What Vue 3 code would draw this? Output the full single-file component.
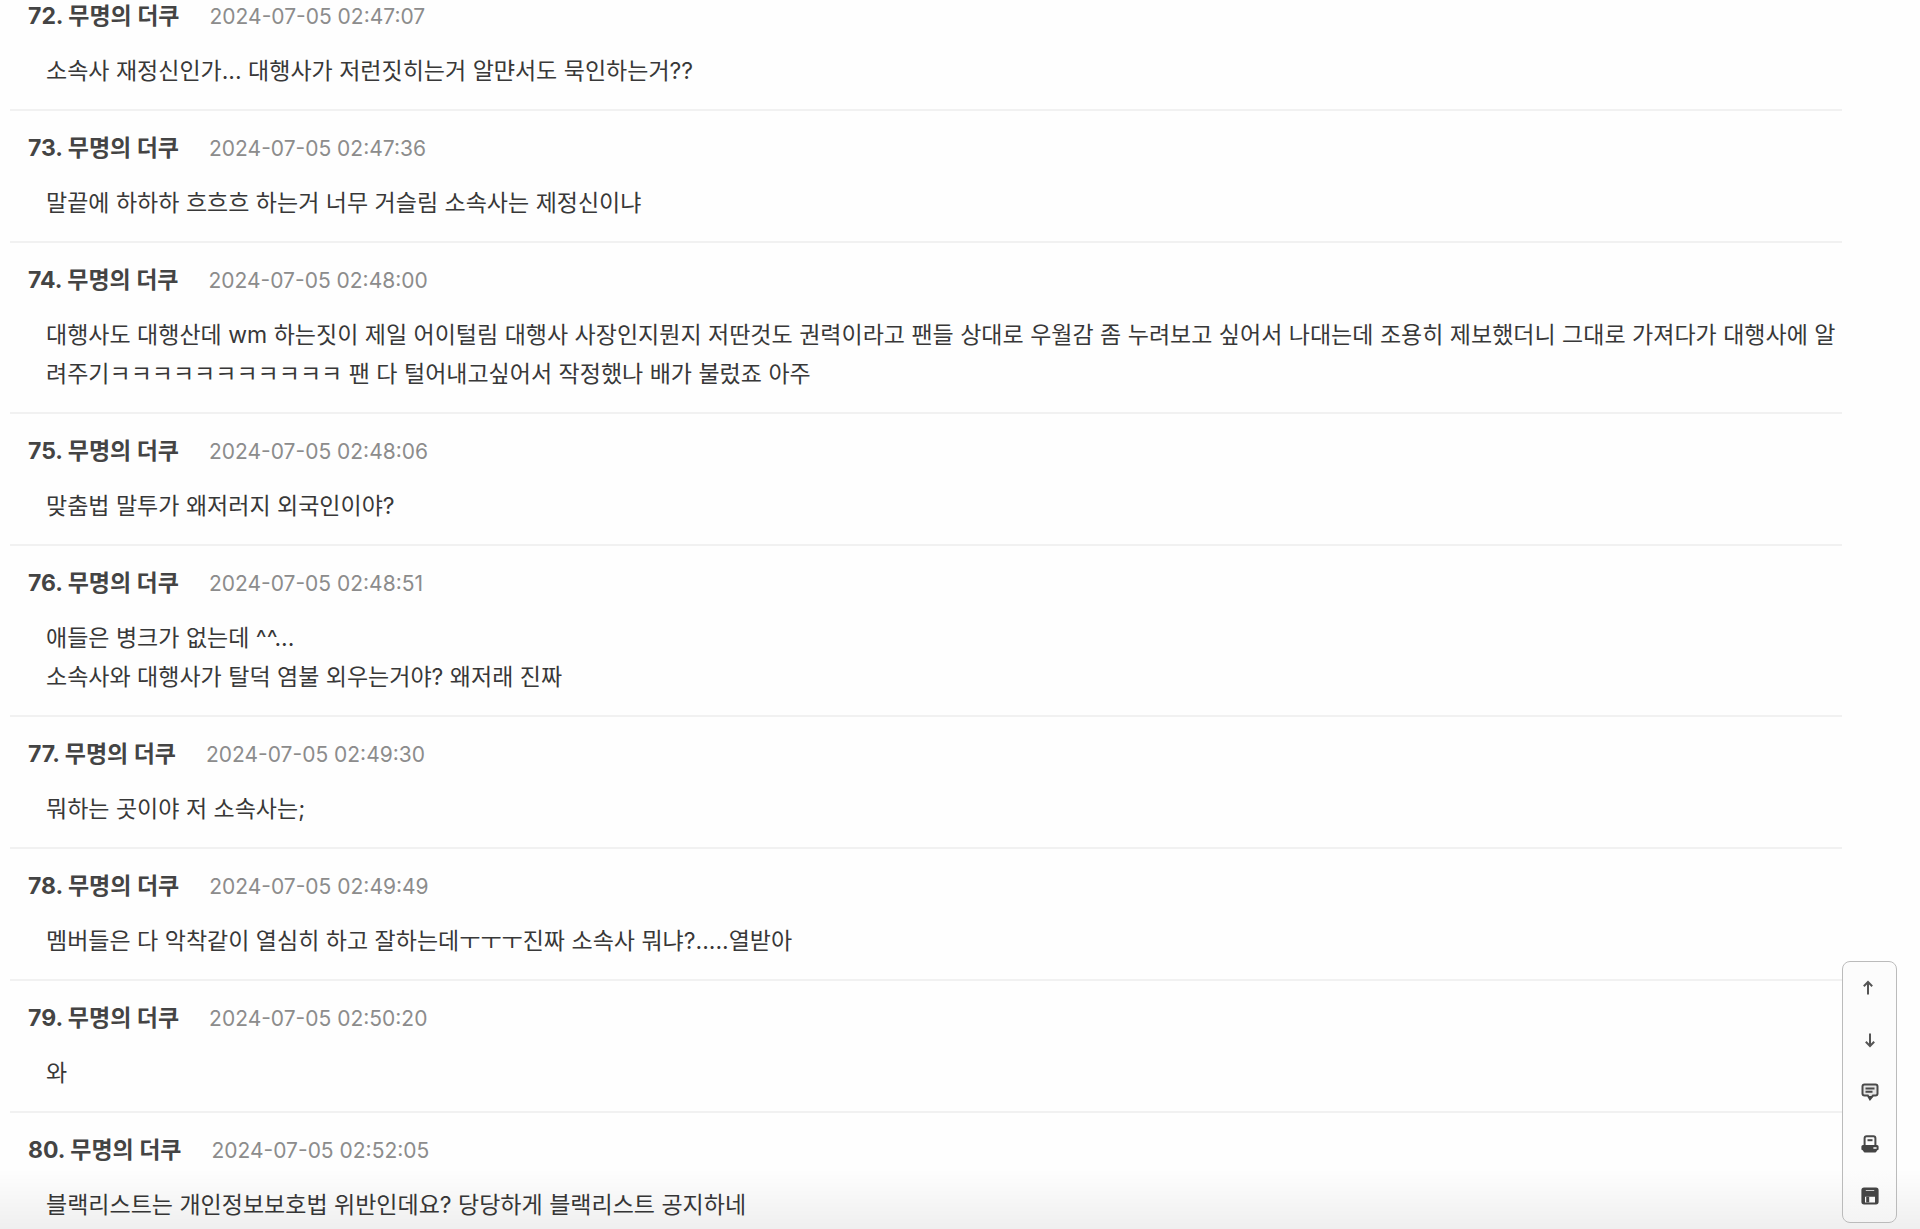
<template>
  <main class="comment-page">
    <ul class="comment-list">
      <li v-for="comment in comments" :key="comment.no" class="comment">
        <div class="comment-meta">
          <strong class="comment-author">{{ comment.no }}. {{ author }}</strong>
          <time class="comment-date">{{ comment.date }}</time>
        </div>
        <p class="comment-body">{{ comment.text }}</p>
      </li>
    </ul>

    <div class="bottom-shade"></div>

    <nav class="side-tools">
      <button type="button" aria-label="맨 위로" @click="scrollToTop">
        <svg class="arrow arrow-up" viewBox="0 0 12 16">
          <path d="M6 14.5V2.5M1.8 6.2L6 2L10.2 6.2" />
        </svg>
      </button>
      <button type="button" aria-label="맨 아래로" @click="scrollToBottom">
        <svg class="arrow" viewBox="0 0 12 16">
          <path d="M6 1.5V13.5M1.8 9.8L6 14L10.2 9.8" />
        </svg>
      </button>
      <button type="button" aria-label="댓글">
        <svg viewBox="0 0 18 18">
          <path class="line bubble" d="M3.5 1.5H14.5Q16.5 1.5 16.5 3.5V10.5Q16.5 12.5 14.5 12.5H12L9 16.2L6.8 12.5H3.5Q1.5 12.5 1.5 10.5V3.5Q1.5 1.5 3.5 1.5Z" />
          <path class="line" d="M4.5 5.4H13.5M4.5 8.8H11.5" />
          <path class="solid" d="M7 13H11.6L9 17Z" />
        </svg>
      </button>
      <button type="button" aria-label="인쇄">
        <svg viewBox="0 0 18 18">
          <path class="line" d="M3.6 11V3.3Q3.6 1.3 5.6 1.3H12.4Q14.4 1.3 14.4 3.3V11" />
          <path class="line" d="M6.5 5.2H11.5" />
          <path class="solid" fill-rule="evenodd" d="M2 10H16Q17.6 10 17.6 11.6V14Q17.6 15.2 16.2 15.2L15.6 16.2Q15.2 17.4 14 17.4H4Q2.8 17.4 2.4 16.2L1.8 15.2Q0.4 15.2 0.4 14V11.6Q0.4 10 2 10ZM12.4 12.2V13.8H15.6V12.2Z" />
        </svg>
      </button>
      <button type="button" aria-label="스크랩">
        <svg viewBox="0 0 18 18">
          <path class="solid" fill-rule="evenodd" d="M3 0.6H15Q17.6 0.6 17.6 3.2V14.8Q17.6 17.4 15 17.4H3Q0.4 17.4 0.4 14.8V3.2Q0.4 0.6 3 0.6ZM4.8 3.2V4H13.2V3.2ZM4 9.8V15.4H14V9.8Z" />
          <path class="solid" d="M5.2 9.8H8.2V15.4H5.2Z" />
        </svg>
      </button>
    </nav>
  </main>
</template>

<script setup>
import { ref } from 'vue';

const author = '무명의 더쿠';

const comments = ref([
  { no: 72, date: '2024-07-05 02:47:07', text: '소속사 재정신인가... 대행사가 저런짓히는거 알먄서도 묵인하는거??' },
  { no: 73, date: '2024-07-05 02:47:36', text: '말끝에 하하하 흐흐흐 하는거 너무 거슬림 소속사는 제정신이냐' },
  { no: 74, date: '2024-07-05 02:48:00', text: '대행사도 대행산데 wm 하는짓이 제일 어이털림 대행사 사장인지뭔지 저딴것도 권력이라고 팬들 상대로 우월감 좀 누려보고 싶어서 나대는데 조용히 제보했더니 그대로 가져다가 대행사에 알려주기ㅋㅋㅋㅋㅋㅋㅋㅋㅋㅋㅋ 팬 다 털어내고싶어서 작정했나 배가 불렀죠 아주' },
  { no: 75, date: '2024-07-05 02:48:06', text: '맞춤법 말투가 왜저러지 외국인이야?' },
  { no: 76, date: '2024-07-05 02:48:51', text: '애들은 병크가 없는데 ^^...\n소속사와 대행사가 탈덕 염불 외우는거야? 왜저래 진짜' },
  { no: 77, date: '2024-07-05 02:49:30', text: '뭐하는 곳이야 저 소속사는;' },
  { no: 78, date: '2024-07-05 02:49:49', text: '멤버들은 다 악착같이 열심히 하고 잘하는데ㅜㅜㅜ진짜 소속사 뭐냐?.....열받아' },
  { no: 79, date: '2024-07-05 02:50:20', text: '와' },
  { no: 80, date: '2024-07-05 02:52:05', text: '블랙리스트는 개인정보보호법 위반인데요? 당당하게 블랙리스트 공지하네' },
]);

const scrollToTop = () => {
  window.scrollTo({ top: 0 });
};

const scrollToBottom = () => {
  window.scrollTo({ top: document.body.scrollHeight });
};
</script>

<style>
body {
  margin: 0;
  background: #fefefe;
}
</style>

<style scoped>
.comment-page {
  height: 100vh;
  overflow: hidden;
  font-family: Inter, "Noto Sans CJK KR", sans-serif;
  color: #383838;
}

.comment-list {
  list-style: none;
  margin: -21px 78px 0 10px;
  padding: 0;
}

.comment {
  padding: 19px 0 18px 18px;
  border-bottom: 2px solid #f1f1f1;
}

.comment-meta {
  display: flex;
  align-items: baseline;
  gap: 30px;
  height: 36px;
  margin-bottom: 18px;
  white-space: nowrap;
}

.comment-author {
  font-size: 23px;
  line-height: 36px;
  font-weight: 700;
  color: #444;
}

.comment-date {
  font-size: 21px;
  line-height: 36px;
  color: #8c8c8c;
}

.comment-body {
  margin: 0;
  padding-left: 18px;
  font-size: 23px;
  line-height: 39px;
  white-space: pre-line;
  word-break: break-all;
}

/* Soft fade along the bottom edge of the window */
.bottom-shade {
  position: fixed;
  left: 0;
  right: 0;
  bottom: 0;
  height: 60px;
  background: linear-gradient(to bottom, rgba(0, 0, 0, 0), rgba(0, 0, 0, 0.06));
  pointer-events: none;
}

.side-tools {
  position: fixed;
  right: 23px;
  bottom: 6px;
  display: flex;
  flex-direction: column;
  box-sizing: border-box;
  width: 55px;
  border: 1px solid #bbb;
  border-radius: 8px;
  background: linear-gradient(to bottom, #fcfcfc 80%, #f4f4f4);
}

.side-tools button {
  display: flex;
  align-items: center;
  justify-content: center;
  height: 52px;
  padding: 0;
  border: 0;
  background: none;
  cursor: pointer;
}

.side-tools svg {
  width: 18px;
  height: 18px;
}

.side-tools .arrow {
  width: 12px;
  height: 16px;
  fill: none;
  stroke: #555;
  stroke-width: 2;
}

.side-tools .arrow-up {
  margin-right: 3px;
}

.line {
  fill: none;
  stroke: #4a4a4a;
  stroke-width: 2;
}

.bubble {
  fill: #e6e6e6;
}

.solid {
  fill: #444;
}
</style>
